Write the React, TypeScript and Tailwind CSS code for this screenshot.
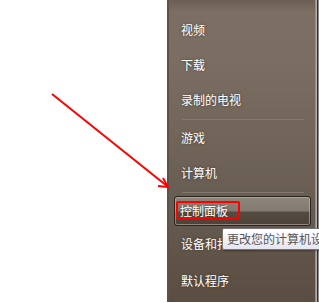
import React from "react";

const font = { fontFamily: '"Noto Sans CJK SC", "Noto Sans", sans-serif' };

function Row({ label, h }: { label: string; h: string }) {
  return (
    <div className={`flex items-center pl-[12px] ${h}`}>
      <span className="text-[12px] leading-none text-white [text-shadow:0_0_3px_rgba(40,30,20,0.6)]">{label}</span>
    </div>
  );
}

function Sep() {
  return (
    <div className="h-[3px] pt-[2px] pl-[13px] pr-[11px]">
      <div className="h-px bg-[#8c8178] opacity-70" />
    </div>
  );
}

export default function App() {
  return (
    <div className="relative w-[319px] h-[303px] bg-white overflow-hidden" style={font}>
      <div className="flex h-[302px]">
        <div className="w-[167px] shrink-0 bg-white" />
        <div className="relative w-[148px] shrink-0 flex flex-col border-l-2 border-[#5e5248] bg-[linear-gradient(180deg,#6b5f55_0px,#7b6f63_12px,#7a6e62_60px,#71655a_140px,#655a4f_220px,#5a4d42_302px)]">
          <div className="h-[12px]" />
          <Row label="视频" h="h-[35px]" />
          <Row label="下载" h="h-[35px]" />
          <Row label="录制的电视" h="h-[35px]" />
          <Sep />
          <Row label="游戏" h="h-[35px]" />
          <Row label="计算机" h="h-[35px]" />
          <div className="h-[4px] pt-[2px] pl-[13px] pr-[11px]">
            <div className="h-px bg-[#8c8178] opacity-70" />
          </div>
          <div className="pt-[2px] pl-[5px] pr-[4px]">
            <div className="relative h-[30px] rounded-[3px] border border-[#2a241f] shadow-[inset_0_0_0_1px_rgba(200,190,180,0.55)] bg-[linear-gradient(180deg,#8e857b_0%,#827970_50%,#564b41_54%,#4c4239_100%)] flex items-center pl-[5px]">
              <span className="text-[12px] leading-none text-white [text-shadow:0_0_3px_rgba(40,30,20,0.6)]">控制面板</span>
              <div className="absolute left-[1px] top-[4px] w-[64px] h-[18px] border-2 border-[#ff0000] rounded-[2px]" />
            </div>
          </div>
          <Row label="设备和打印机" h="h-[35px]" />
          <Row label="默认程序" h="h-[40px]" />
        </div>
        <div className="flex shrink-0">
          <div className="w-px bg-[#9a9088]" />
          <div className="w-px bg-[#b4aca4]" />
          <div className="w-px bg-[#2e2e2e]" />
          <div className="w-px bg-[#8a8a8a]" />
        </div>
      </div>

      <div className="absolute left-[222px] top-[228px] h-[22px] w-[110px] border border-[#767676] rounded-[2px] bg-[linear-gradient(180deg,#ffffff_0%,#f2f2f7_50%,#e4e5f0_100%)] shadow-[1px_1px_2px_rgba(0,0,0,0.35)] flex items-center pl-[4px]">
        <span className="text-[12px] leading-none text-[#575757] whitespace-nowrap">更改您的计算机设置</span>
      </div>

      <svg className="absolute left-0 top-0" width="319" height="303" viewBox="0 0 319 303">
        <line x1="52" y1="94" x2="167" y2="186" stroke="#ff0000" strokeWidth="2" />
        <polyline points="163,178 168,187 158,186" fill="none" stroke="#ff0000" strokeWidth="2" />
      </svg>
    </div>
  );
}
